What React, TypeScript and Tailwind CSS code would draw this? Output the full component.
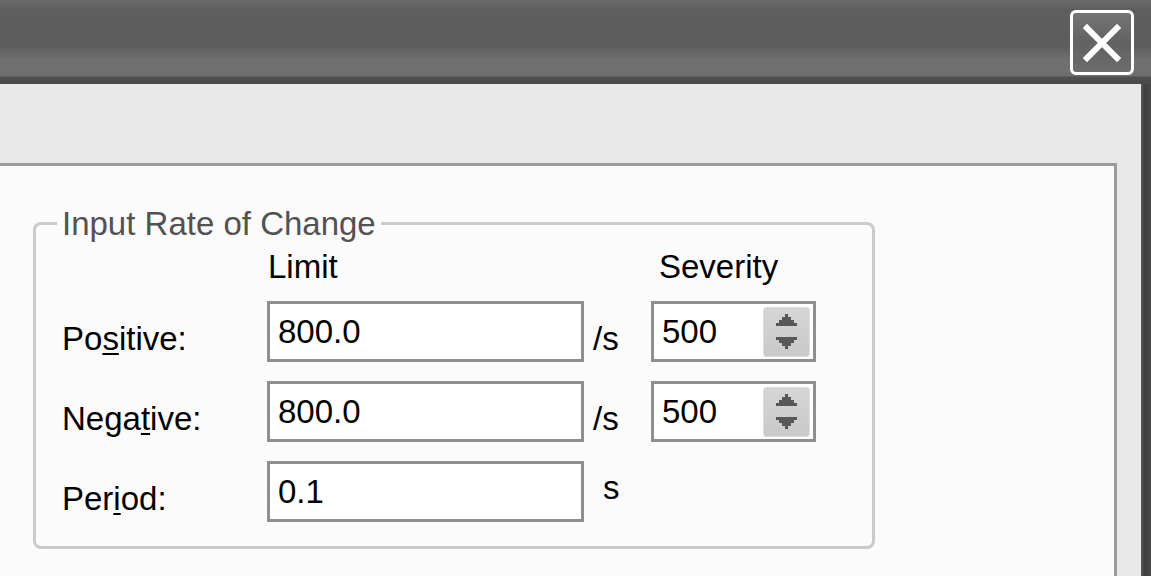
import React from "react";

const FONT = "font-['Liberation_Sans',Arial,sans-serif]";

function CloseButton() {
  return (
    <div className="w-[64px] h-[65px] rounded-[6px] border-[3px] border-white bg-[linear-gradient(180deg,#747474_0%,#626262_50%,#6c6c6c_100%)] flex items-center justify-center">
      <svg width="40" height="40" viewBox="0 0 40 40">
        <path d="M5 5 L35 35 M35 5 L5 35" stroke="#ffffff" strokeWidth="6" strokeLinecap="square" />
      </svg>
    </div>
  );
}

function SpinArrows() {
  // stepped XP-style arrows, 3px per source pixel
  return (
    <div className="w-[47px] h-[50px] rounded-[3px] border border-[#dedede] bg-[linear-gradient(180deg,#d6d6d6_0%,#c9c9c9_100%)]">
      <svg width="45" height="48" viewBox="0 0 45 48">
        <g fill="#585858">
          <rect x="21" y="6" width="3" height="3" />
          <rect x="18" y="9" width="9" height="3" />
          <rect x="15" y="12" width="15" height="3" />
          <rect x="12" y="15" width="21" height="3" />
          <rect x="12" y="29" width="21" height="3" />
          <rect x="15" y="32" width="15" height="3" />
          <rect x="18" y="35" width="9" height="3" />
          <rect x="21" y="38" width="3" height="3" />
        </g>
      </svg>
    </div>
  );
}

function Label({ pre, u, post }: { pre: string; u: string; post: string }) {
  return (
    <div className="pt-[21px] leading-[33px] text-black">
      {pre}
      <span className="underline decoration-[2px] underline-offset-[3px]">{u}</span>
      {post}
    </div>
  );
}

function TextBox({ value }: { value: string }) {
  return (
    <div className="h-[61px] border-[3px] border-[#8e8e8e] bg-white flex items-center pl-[8px] leading-[33px] text-black">
      {value}
    </div>
  );
}

function SpinBox({ value }: { value: string }) {
  return (
    <div className="h-[61px] border-[3px] border-[#8e8e8e] bg-white flex items-start justify-between pl-[8px] pr-[3px] pt-[3px]">
      <span className="leading-[33px] mt-[8px] text-black">{value}</span>
      <SpinArrows />
    </div>
  );
}

export default function App() {
  return (
    <div className={`w-[1151px] h-[576px] flex flex-col overflow-hidden text-[33px] ${FONT}`}>
      {/* title bar */}
      <div className="h-[84px] flex justify-end items-start pt-[10px] pr-[17px] bg-[linear-gradient(180deg,#6a6a6a_0%,#5e5e5e_12%,#5d5d5d_55%,#717171_72%,#6e6e6e_90%,#4e4e4e_92%,#4a4a4a_100%)]">
        <CloseButton />
      </div>

      <div className="flex-1 flex">
        <div className="flex-1 flex flex-col bg-[#e8e8e8] pt-[79px] pr-[24px]">
          {/* tab page */}
          <div className="flex-1 bg-[#fbfbfb] border-t-[3px] border-r-[3px] border-[#9c9c9c] pl-[33px] pt-[41px]">
            <fieldset className="w-[842px] border-[3px] border-[#cbcbcb] rounded-[8px] pl-[26px] pb-[24px]">
              <legend className="ml-[-5px] px-[5px] leading-[33px] text-[#525252]">Input Rate of Change</legend>

              <div className="grid grid-cols-[205px_317px_67px_165px] mt-[10px]">
                <div />
                <div className="leading-[33px] pl-[1px] text-black">Limit</div>
                <div />
                <div className="leading-[33px] pl-[8px] text-black">Severity</div>
              </div>

              <div className="grid grid-cols-[205px_317px_67px_165px] gap-y-[19px] mt-[18px]">
                <Label pre="Po" u="s" post="itive:" />
                <TextBox value="800.0" />
                <div className="pt-[21px] pl-[9px] leading-[33px] text-black">/s</div>
                <SpinBox value="500" />

                <Label pre="Nega" u="t" post="ive:" />
                <TextBox value="800.0" />
                <div className="pt-[21px] pl-[9px] leading-[33px] text-black">/s</div>
                <SpinBox value="500" />

                <Label pre="Per" u="i" post="od:" />
                <TextBox value="0.1" />
                <div className="pt-[10px] pl-[19px] leading-[33px] text-black">s</div>
                <div />
              </div>
            </fieldset>
          </div>
        </div>
        {/* right window frame */}
        <div className="w-[10px] bg-[linear-gradient(90deg,#5a5a5a_0%,#3e3e3e_40%,#4a4a4a_100%)]" />
      </div>
    </div>
  );
}
